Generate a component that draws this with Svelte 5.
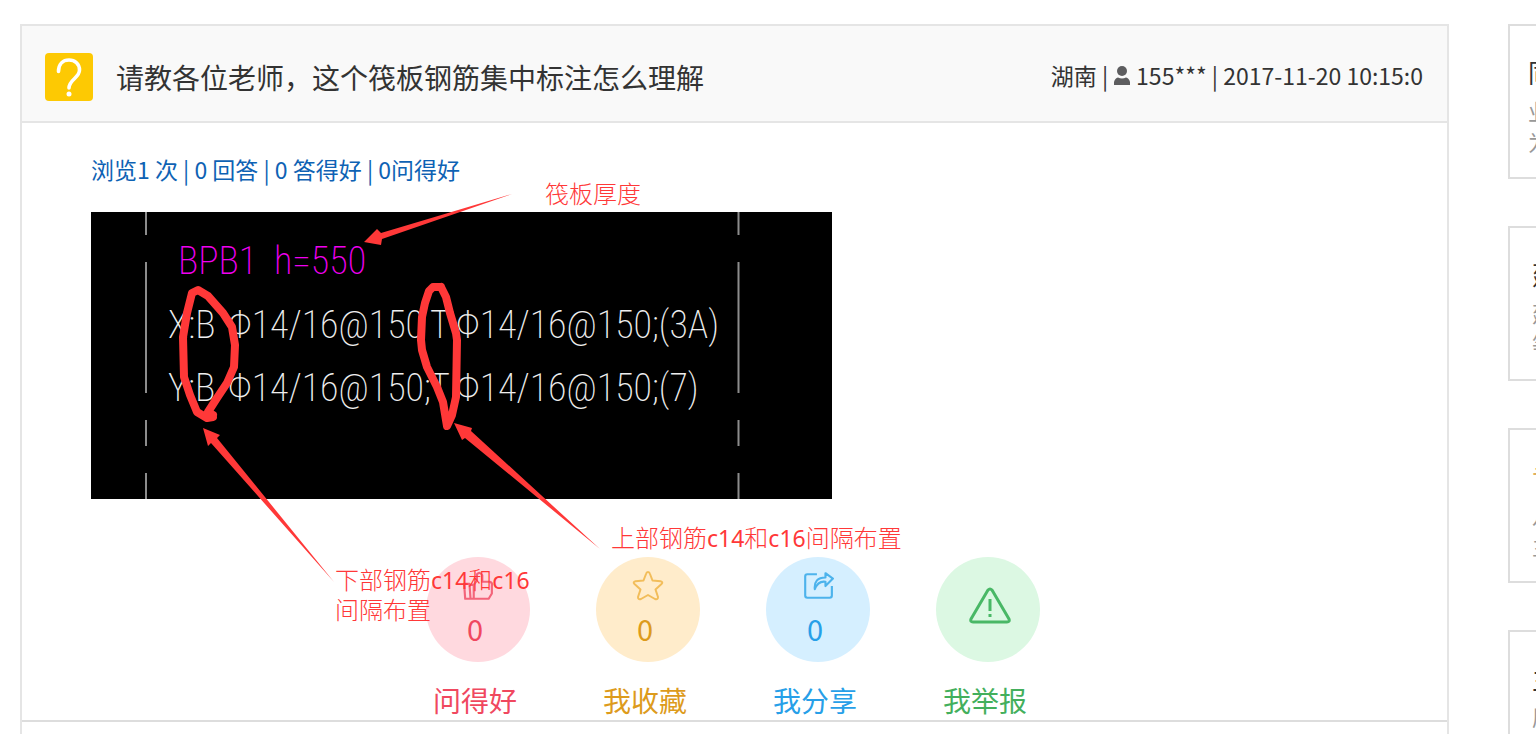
<script>
  const actions = [
    { id: 'like', label: '问得好', count: 0 },
    { id: 'star', label: '我收藏', count: 0 },
    { id: 'share', label: '我分享', count: 0 },
    { id: 'report', label: '我举报', count: null },
  ];
  const related = [
    { title: '同', lines: ['业', '为'] },
    { title: '建', lines: ['建', '等'], inset: true },
    { title: '专', lines: ['八', '主'], inset: true, faint: true },
    { title: '主', lines: ['原', '筋'], inset: true },
  ];
  const dashes = [[212, 235], [262, 393], [420, 446], [473, 499]];
</script>

<div class="page">
  <main class="card">
    <header>
      <svg class="badge" viewBox="0 0 48 48" aria-hidden="true">
        <rect width="48" height="48" rx="4" fill="#fdc903" />
        <path d="M13.500 18.500C13.500 11 18 7 24 7c6 0 10.500 4 10.500 10 0 8-10.500 9.500-10.500 18" fill="none" stroke="#fff" stroke-width="3.600" stroke-linecap="round" />
        <circle cx="24" cy="41" r="2.500" fill="#fff" />
      </svg>
      <h1>请教各位老师，这个筏板钢筋集中标注怎么理解</h1>
      <p class="meta">
        <span>湖南 |</span>
        <svg class="user" viewBox="0 0 16 19" aria-hidden="true">
          <circle cx="8" cy="5" r="5" /><path d="M0 19v-3q1-4 4-4.500 4 2 8 0 3 .500 4 4.500v3z" />
        </svg>
        <span>155*** | 2017-11-20 10:15:0</span>
      </p>
    </header>

    <section class="question">
      <p class="stats">浏览1 次 | 0 回答 | 0 答得好 | 0问得好</p>

      <svg class="drawing" viewBox="91 212 741 287" role="img" aria-label="筏板钢筋集中标注">
        <rect x="91" y="212" width="741" height="287" fill="#000" />
        {#each dashes as [a, b]}
          <path class="dash" d="M146 {a}V{b}M738.500 {a}V{b}" />
        {/each}
        <g class="cad">
          <text class="slab" x="178" y="274">BPB1</text>
          <text class="slab" x="274" y="274">h=550</text>
          <text x="168" y="338">X:B</text>
          <text x="228" y="338">Φ14/16@150</text>
          <text x="430" y="338">T</text>
          <text x="456" y="338">Φ14/16@150;(3A)</text>
          <text x="168" y="401">Y:B</text>
          <text x="228" y="401">Φ14/16@150;</text>
          <text x="430" y="401">T</text>
          <text x="456" y="401">Φ14/16@150;(7)</text>
        </g>
        <g class="loops">
          <path d="M213 417L207 418 197 412 190 395 184 377 183 337 187 313 192 293 198 290 208 296 223 313 232 327 235 345 234 367 227 383 217 398 208 412 213 415" />
          <path d="M441 287H433L429 291 425 303 422 317 421 340 422 350 427 367 437 387 443 402 446 420 447 426 452 415 456 397 457 340 456 333 450 313 446 297 441 287" />
        </g>
        <g fill="#ff3838">
          <path d="M364 242L377 229 381 233 512 194 382 239 381 245z" />
          <path d="M203 428L220 435 217 438 334 582 211 443 208 446z" />
          <path d="M454 423L472 428 471 431 600 549 465 438 462 440z" />
        </g>
        <g class="notes">
          <text x="545" y="203">筏板厚度</text>
          <text x="611" y="547">上部钢筋<tspan>c14</tspan>和<tspan>c16</tspan>间隔布置</text>
          <text x="335" y="589">下部钢筋<tspan>c14</tspan>和<tspan>c16</tspan></text>
          <text x="335" y="619">间隔布置</text>
        </g>
      </svg>

      <div class="actions">
        {#each actions as action}
          <button class={action.id}>
            <span class="circle">
              {#if action.id === 'like'}
                <svg viewBox="0 0 30 30"><path d="M2 13h5l1 14H3zM11 27V14l3-4V4q3-3 5 1v6h7q3 1 2 4v7l-3 5H8M8 14h3" /></svg>
              {:else if action.id === 'star'}
                <svg viewBox="0 0 32 32"><path d="M16 2q1.500 0 2 2l2.500 6.500 8 .800q3 .700 1 2.700l-6 5.500 2.500 7.500q0 3-3 2l-7-4-7 4q-3 1-3-2l2.500-7.500-6-5.500q-2-2 1-2.700l8-.800L14 4q.500-2 2-2z" /></svg>
              {:else if action.id === 'share'}
                <svg viewBox="0 0 30 30"><path d="M14 4H5Q3 4 3 6v18q0 2 2 2h21q2 0 2-2V15" /><path d="M12 18q-1-11 10-11V3l7 5-7 7v-4q-7-1-10 7z" /></svg>
              {:else}
                <svg viewBox="0 0 42 38"><path d="M19 3q2-2 4 0l17 29q1 3-2 3H4q-3 0-2-3z" /><path d="M21 12v12M21 27v3" /></svg>
              {/if}
              {#if action.count !== null}<span class="count">{action.count}</span>{/if}
            </span>
            <span class="label">{action.label}</span>
          </button>
        {/each}
      </div>
    </section>
  </main>

  <aside>
    {#each related as item}
      <article class:inset={item.inset} class:faint={item.faint}>
        <h2>{item.title}</h2>
        {#each item.lines as line}<p>{line}</p>{/each}
      </article>
    {/each}
  </aside>
</div>

<style>
  :global(body) { background: #fff; }
  .page {
    box-sizing: border-box;
    display: flex;
    gap: 59px;
    height: 100vh;
    padding: 24px 0 0 20px;
    overflow: hidden;
    font-family: "Noto Sans CJK SC", sans-serif;
    color: #333;
  }
  h1, h2, p { margin: 0; font-weight: 400; }
  .card {
    flex: 1;
    min-width: 0;
    border: 2px solid #e5e5e5;
    border-bottom: 0;
  }
  header {
    display: flex;
    align-items: center;
    padding: 27px 24px 20px 23px;
    background: #f9f9f9;
    border-bottom: 2px solid #e5e5e5;
  }
  .badge { width: 48px; height: 48px; margin-right: 23px; }
  h1 { flex: 1; font-size: 28px; line-height: 48px; white-space: nowrap; }
  .meta {
    display: flex;
    align-items: center;
    gap: 6px;
    font-size: 23px;
    line-height: 44px;
    padding-bottom: 4px;
    white-space: nowrap;
  }
  .user { width: 16px; height: 19px; fill: #5d5d5f; }
  .question {
    border-bottom: 2px solid #ddd;
    padding-left: 69px;
  }
  .stats {
    padding: 26px 0 23px;
    font-size: 23px;
    line-height: 40px;
    color: #0e62b4;
  }
  .drawing {
    display: block;
    position: relative;
    z-index: 1;
    width: 741px;
    height: 287px;
    overflow: visible;
    pointer-events: none;
  }
  .dash { stroke: #8c8c8c; stroke-width: 2; }
  .cad {
    font-family: "Roboto Condensed", "Roboto", sans-serif;
    font-size: 38px;
    font-weight: 200;
    fill: #eee;
  }
  .cad .slab { fill: #f000f0; }
  .loops {
    fill: none;
    stroke: #ff3838;
    stroke-width: 8;
    stroke-linecap: round;
    stroke-linejoin: round;
  }
  .notes { font-size: 24px; font-weight: 300; fill: #ff3838; }
  .notes tspan { font-family: "Noto Sans", sans-serif; font-size: 23px; font-weight: 400; }
  .actions {
    display: flex;
    gap: 66px;
    padding: 58px 0 0 335px;
  }
  button {
    display: flex;
    flex-direction: column;
    width: 104px;
    padding: 0;
    border: 0;
    background: none;
    font: inherit;
    color: var(--ink);
  }
  .circle {
    box-sizing: border-box;
    display: flex;
    flex-direction: column;
    align-items: center;
    width: 104px;
    height: 105px;
    padding-top: 13px;
    border-radius: 50%;
    background: var(--tint);
  }
  .circle svg {
    width: 32px;
    height: 32px;
    fill: none;
    stroke: var(--line);
    stroke-width: 2;
    stroke-linejoin: round;
  }
  .count { width: 32px; font-size: 29px; line-height: 52px; padding-right: 6px; }
  .label { width: 98px; font-size: 28px; line-height: 40px; padding: 18px 0 0; }
  .like { --ink: #f0485f; --tint: #ffd9df; --line: #f3647a; }
  .star { --ink: #dd9b1c; --tint: #ffeccb; --line: #f2bd5a; }
  .share { --ink: #279fe8; --tint: #d5efff; --line: #4db3ec; }
  .report { --ink: #43af5c; --tint: #dcf8e3; --line: #49b866; }
  .report .circle { justify-content: center; padding: 0 0 8px 4px; }
  .report .circle svg { width: 42px; height: 38px; stroke-width: 3; }
  aside {
    flex: 0 0 28px;
    display: flex;
    flex-direction: column;
    gap: 47px;
    overflow: hidden;
  }
  article {
    box-sizing: border-box;
    flex: 0 0 155px;
    width: 320px;
    padding: 24px 18px 21px;
    border: 2px solid #ddd;
  }
  article.inset { padding-left: 22px; }
  h2 { font-size: 26px; line-height: 44px; }
  article p { font-size: 22px; line-height: 30px; padding-top: 1px; color: #999; }
  .faint h2 { color: #e0b060; }
</style>
